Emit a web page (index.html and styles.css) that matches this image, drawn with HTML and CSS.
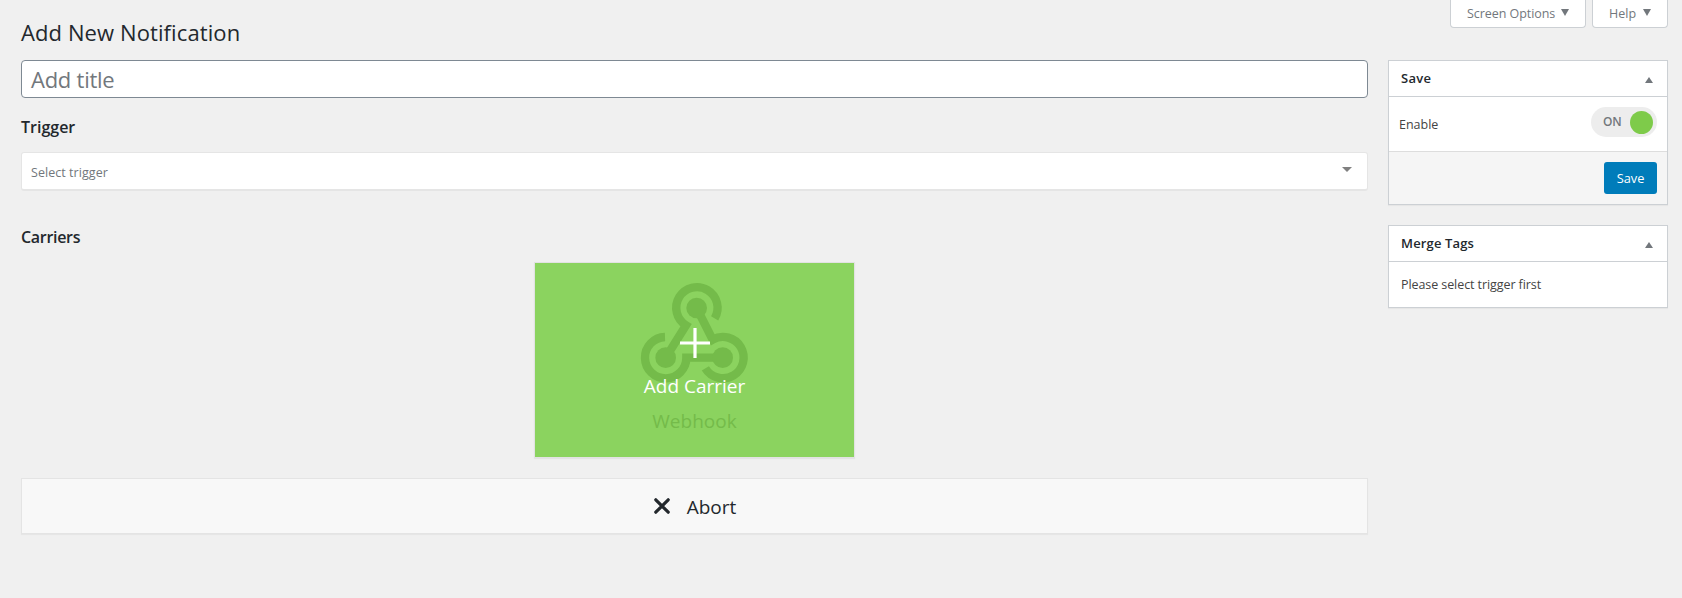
FILE: index.html
```html
<!DOCTYPE html>
<html lang="en">
<head>
<meta charset="utf-8">
<title>Add New Notification</title>
<link rel="stylesheet" href="styles.css">
</head>
<body>
<nav class="screen-meta">
  <button class="meta-tab meta-options"><span>Screen Options</span><svg width="8" height="7" viewBox="0 0 8 7"><path d="M0 0h8L4 7z"/></svg></button>
  <button class="meta-tab meta-help"><span>Help</span><svg width="8" height="7" viewBox="0 0 8 7"><path d="M0 0h8L4 7z"/></svg></button>
</nav>
<div class="layout">
  <main class="content">
    <h1 class="page-title"><span>Add New Notification</span></h1>
    <div class="title-field"><span>Add title</span></div>
    <h2 class="section-title trigger-title"><span>Trigger</span></h2>
    <div class="select"><span>Select trigger</span><svg width="10" height="5" viewBox="0 0 10 5"><path d="M0 0h10L5 5z"/></svg></div>
    <h2 class="section-title carriers-title"><span>Carriers</span></h2>
    <div class="card">
      <svg class="webhook-icon" width="130" height="120" viewBox="0 0 390 360">
        <g fill="none" stroke="#74bb4a" stroke-width="25">
          <path d="M254 133A62 62 0 1 0 168 154L107 251"/>
          <path d="M105 189A62 62 0 1 0 169 251L278 251"/>
          <path d="M200 102L248 197A62 62 0 1 1 226 283"/>
        </g>
        <g fill="#74bb4a"><circle cx="200" cy="102" r="31"/><circle cx="107" cy="251" r="31"/><circle cx="278" cy="251" r="31"/></g>
      </svg>
      <span class="card-name">Webhook</span>
      <div class="card-overlay">
        <svg width="30" height="30" viewBox="0 0 30 30"><path d="M15 0v30M0 15h30" stroke="#fff" stroke-width="3.2"/></svg>
        <span class="card-action">Add Carrier</span>
      </div>
    </div>
    <div class="abort">
      <svg width="16" height="16" viewBox="0 0 16 16"><path d="M1.8 1.8l12.4 12.4M14.2 1.8L1.8 14.2" stroke="#23282d" stroke-width="3.2" stroke-linecap="round"/></svg>
      <span>Abort</span>
    </div>
  </main>
  <aside class="sidebar">
    <section class="box">
      <h2 class="box-head"><span class="head-save">Save</span><svg width="8" height="6" viewBox="0 0 8 6"><path d="M0 6h8L4 0z"/></svg></h2>
      <div class="enable-row"><span class="enable-label">Enable</span><div class="toggle"><span>ON</span><i class="knob"></i></div></div>
      <div class="box-foot"><button class="save-btn"><span>Save</span></button></div>
    </section>
    <section class="box">
      <h2 class="box-head"><span class="head-merge">Merge Tags</span><svg width="8" height="6" viewBox="0 0 8 6"><path d="M0 6h8L4 0z"/></svg></h2>
      <div class="merge-body"><span>Please select trigger first</span></div>
    </section>
  </aside>
</div>
</body>
</html>
```

FILE: styles.css
```css
* { box-sizing: border-box; }
body {
  margin: 0;
  height: 598px;
  overflow: hidden;
  background: #f0f0f0;
  color: #23282d;
  font-family: "Open Sans", "Noto Sans", sans-serif;
  font-size: 12.5px;
}
svg { display: block; flex: none; }
h1, h2 { margin: 0; }
span { white-space: nowrap; }
button { font: inherit; cursor: pointer; }

.screen-meta {
  display: flex;
  justify-content: flex-end;
  gap: 6px;
  height: 28px;
  padding-right: 14px;
}
.meta-tab {
  display: flex;
  align-items: center;
  justify-content: space-between;
  height: 28px;
  padding: 0 16px 1px;
  border: 1px solid #ccd0d4;
  border-top: 0;
  border-radius: 0 0 4px 4px;
  background: #fff;
  color: #72777c;
}
.meta-tab svg, .box-head svg { fill: #72777c; }
.meta-tab svg { margin-top: -1px; }
.meta-options { width: 136px; letter-spacing: -0.06px; }
.meta-help { width: 76px; }

.layout {
  display: flex;
  gap: 20px;
  padding: 0 14px 0 21px;
}
.content { width: 1347px; margin-top: -28px; }
.page-title {
  height: 60px;
  padding-top: 16px;
  font-size: 22px;
  font-weight: 400;
  line-height: 32px;
  letter-spacing: 0.1px;
}
.title-field {
  display: flex;
  align-items: center;
  height: 38px;
  padding: 0 9px 0;
  border: 1px solid #7e8993;
  border-radius: 4px;
  background: #fff;
  color: #72777c;
  font-size: 22px;
  letter-spacing: -0.25px;
}
.section-title { font-size: 16px; font-weight: 600; line-height: 24px; }
.trigger-title { margin: 17px 0 13px; }
.select {
  display: flex;
  align-items: center;
  justify-content: space-between;
  height: 39px;
  padding: 2px 15px 0 9px;
  border: 1px solid #e5e5e5;
  border-bottom-width: 2px;
  border-radius: 3px;
  background: #fff;
  color: #72777c;
  letter-spacing: 0.05px;
}
.select svg { fill: #808080; margin-top: -5px; }
.carriers-title { margin: 34px 0 13px; letter-spacing: -0.3px; }
.card {
  position: relative;
  display: flex;
  flex-direction: column;
  align-items: center;
  width: 321px;
  height: 196px;
  margin: 0 auto;
  padding-top: 11px;
  border: 1px solid #e2e2e2;
  background: #8bd35f;
  box-shadow: 0 1px 1px rgba(0,0,0,.05);
}
.card-name { margin-top: 13px; color: #74bb4a; font-size: 19px; line-height: 28px; }
.card-overlay {
  position: absolute;
  inset: 0;
  display: flex;
  flex-direction: column;
  align-items: center;
  padding-top: 65px;
  color: #fff;
}
.card-action { margin-top: 14px; font-size: 19px; line-height: 28px; }
.abort {
  display: flex;
  align-items: center;
  justify-content: center;
  gap: 17px;
  height: 56px;
  margin-top: 20px;
  padding-left: 1px;
  border: 1px solid #e4e4e4;
  background: #f8f8f8;
  box-shadow: 0 1px 1px rgba(0,0,0,.04);
  font-size: 19px;
}
.abort span { padding-top: 2px; }

.sidebar {
  display: flex;
  flex-direction: column;
  gap: 20px;
  width: 280px;
  margin-top: 32px;
}
.box {
  border: 1px solid #ccd0d4;
  background: #fff;
  box-shadow: 0 1px 1px rgba(0,0,0,.04);
}
.box-head {
  display: flex;
  align-items: center;
  justify-content: space-between;
  height: 36px;
  padding: 0 14px 1px 12px;
  border-bottom: 1px solid #ccd0d4;
  font-size: 13px;
  font-weight: 600;
}
.box-head svg { margin-top: 4px; }
.head-save { letter-spacing: 0.25px; }
.head-merge { letter-spacing: 0.15px; }
.enable-row {
  display: flex;
  justify-content: space-between;
  height: 54px;
  padding: 10px 10px 0;
  color: #444;
}
.enable-label { line-height: 35px; font-weight: 500; }
.toggle {
  display: flex;
  align-items: center;
  justify-content: space-between;
  width: 66px;
  height: 30px;
  padding: 0 4px 0 12px;
  border-radius: 15px;
  background: #ededed;
  color: #72777c;
  font-size: 12px;
  font-weight: 600;
}
.toggle span { padding-bottom: 1px; letter-spacing: -0.3px; }
.knob { width: 23px; height: 23px; border-radius: 50%; background: #7ecb4a; }
.box-foot {
  display: flex;
  justify-content: flex-end;
  height: 53px;
  padding: 10px;
  border-top: 1px solid #ddd;
  background: #f5f5f5;
}
.save-btn {
  width: 53px;
  height: 32px;
  padding: 0;
  border: 0;
  border-radius: 3px;
  background: #007cba;
  color: #fff;
  font-size: 12.8px;
}
.merge-body { height: 45px; padding: 13px 12px; color: #444; line-height: 20px; letter-spacing: -0.08px; }
```
